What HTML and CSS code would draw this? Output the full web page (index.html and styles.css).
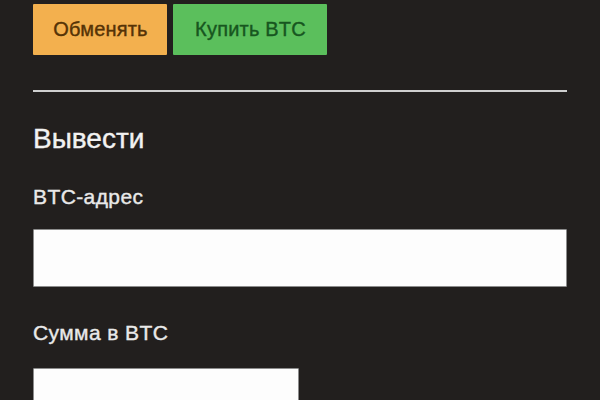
FILE: index.html
```html
<!DOCTYPE html>
<html lang="ru">
<head>
<meta charset="utf-8">
<title>Вывести</title>
<link rel="stylesheet" href="styles.css">
</head>
<body>
<div class="wrap">
  <div class="actions">
    <button class="btn btn-exchange">Обменять</button>
    <button class="btn btn-buy">Купить BTC</button>
  </div>
  <hr class="divider">
  <h2 class="title">Вывести</h2>
  <label class="label" for="addr">BTC-адрес</label>
  <input class="field field-wide" id="addr" type="text">
  <label class="label label-sum" for="sum">Сумма в BTC</label>
  <input class="field field-short" id="sum" type="text">
</div>
</body>
</html>
```
FILE: styles.css
```css
html, body {
  margin: 0;
  padding: 0;
  background: #221f1e;
  height: 100%;
  overflow: hidden;
}
body {
  font-family: "Liberation Sans", Arial, sans-serif;
  color: #ececec;
}
.wrap {
  width: 534px;
  padding: 4px 33px 0;
  display: flex;
  flex-direction: column;
}
.actions {
  display: flex;
  gap: 6px;
}
.btn {
  font-family: "Liberation Sans", Arial, sans-serif;
  font-size: 20px;
  height: 51px;
  padding: 0 18px 0 19px;
  border: none;
  border-radius: 1px;
  cursor: pointer;
  -webkit-text-stroke: 0.4px currentColor;
  letter-spacing: 0.2px;
}
.btn-exchange {
  background: #f3b04e;
  color: #553306;
  width: 134px;
}
.btn-buy {
  background: #5bbf5c;
  color: #17561f;
  width: 154px;
}
.divider {
  margin: 35px 0 0;
  border: none;
  height: 2px;
  background: #cfcfcf;
  width: 534px;
}
.title {
  margin: 31px 0 0;
  font-size: 28px;
  line-height: 32px;
  font-weight: normal;
  color: #f2f2f2;
  -webkit-text-stroke: 0.4px currentColor;
}
.label {
  margin-top: 30px;
  font-size: 21px;
  line-height: 24px;
  color: #e9e9e9;
  letter-spacing: 0.4px;
  -webkit-text-stroke: 0.4px currentColor;
}
.label-sum {
  margin-top: 34px;
}
.field {
  box-sizing: border-box;
  height: 58px;
  background: #fdfdfd;
  border: 1px solid #8c8c8c;
  border-radius: 1px;
  margin-top: 20px;
  font-size: 20px;
  padding: 0 10px;
}
.field-wide {
  width: 534px;
}
.field-short {
  width: 266px;
  margin-top: 23px;
}
```
